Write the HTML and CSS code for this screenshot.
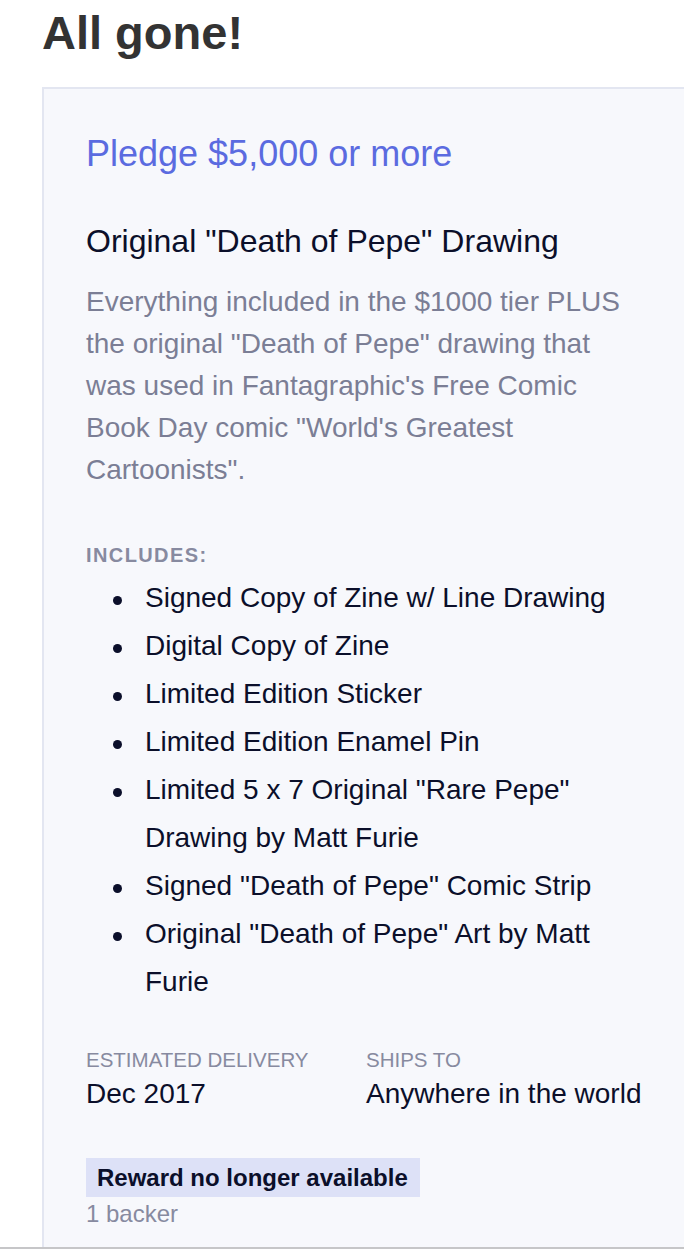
FILE: index.html
```html
<!DOCTYPE html>
<html>
<head>
<meta charset="utf-8">
<link rel="stylesheet" href="styles.css">
</head>
<body>
<div class="page">
  <h1 class="heading">All gone!</h1>
  <div class="card">
    <div class="pledge">Pledge $5,000 or more</div>
    <h3 class="title">Original "Death of Pepe" Drawing</h3>
    <p class="desc">Everything included in the $1000 tier PLUS the original "Death of Pepe" drawing that was used in Fantagraphic's Free Comic Book Day comic "World's Greatest Cartoonists".</p>
    <div class="label includes">INCLUDES:</div>
    <ul class="items">
      <li>Signed Copy of Zine w/ Line Drawing</li>
      <li>Digital Copy of Zine</li>
      <li>Limited Edition Sticker</li>
      <li>Limited Edition Enamel Pin</li>
      <li>Limited 5 x 7 Original "Rare Pepe" Drawing by Matt Furie</li>
      <li>Signed "Death of Pepe" Comic Strip</li>
      <li>Original "Death of Pepe" Art by Matt Furie</li>
    </ul>
    <div class="meta">
      <div class="meta-col first">
        <div class="label">ESTIMATED DELIVERY</div>
        <div class="value">Dec 2017</div>
      </div>
      <div class="meta-col">
        <div class="label">SHIPS TO</div>
        <div class="value">Anywhere in the world</div>
      </div>
    </div>
    <div class="badge">Reward no longer available</div>
    <div class="backers">1 backer</div>
  </div>
  <div class="footer-line"></div>
</div>
</body>
</html>
```
FILE: styles.css
```css
html, body {
  margin: 0;
  padding: 0;
  background: #ffffff;
  overflow-x: hidden;
}
body {
  font-family: "Liberation Sans", Arial, Helvetica, sans-serif;
  color: #0b0f2a;
}
.page {
  width: 684px;
  overflow: hidden;
}
.heading {
  margin: 5px 0 0 42px;
  font-size: 47px;
  line-height: 56px;
  font-weight: bold;
  color: #333333;
}
.card {
  margin: 26px -40px 0 42px;
  background: #f7f8fc;
  border-top: 2px solid #e3e6f1;
  border-left: 2px solid #e3e6f1;
  padding: 43px 0 19px 42px;
}
.pledge {
  font-size: 36px;
  line-height: 44px;
  color: #5b6be0;
}
.title {
  margin: 45px 0 0 0;
  font-size: 32px;
  line-height: 40px;
  font-weight: normal;
  color: #0b0f2a;
}
.desc {
  margin: 20px 0 0 0;
  width: 560px;
  font-size: 28px;
  line-height: 42px;
  color: #7b7e95;
}
.label {
  font-size: 20px;
  line-height: 24px;
  color: #878aa0;
  text-transform: uppercase;
}
.includes {
  margin-top: 52px;
  font-weight: bold;
  letter-spacing: 1.4px;
}
.items {
  margin: 7px 0 0 0;
  padding: 0 0 0 59px;
  width: 500px;
  list-style: none;
  font-size: 28px;
  line-height: 48px;
  color: #0b0f2a;
}
.items li {
  position: relative;
}
.items li::before {
  content: "";
  position: absolute;
  left: -32px;
  top: 22px;
  width: 9px;
  height: 9px;
  border-radius: 50%;
  background: #0b0f2a;
}
.meta {
  display: flex;
  margin-top: 42px;
}
.meta-col.first {
  width: 280px;
}
.meta .label {
  font-size: 20.5px;
}
.value {
  margin-top: 5px;
  font-size: 28px;
  line-height: 34px;
  color: #0b0f2a;
}
.badge {
  display: inline-block;
  margin-top: 47px;
  padding: 0 12px 0 11px;
  background: #dde1f7;
  font-size: 24px;
  line-height: 39px;
  font-weight: bold;
  color: #0b0f2a;
}
.backers {
  margin-top: 3px;
  font-size: 24px;
  line-height: 28px;
  color: #878aa0;
}
.footer-line {
  height: 2px;
  background: #c6c6c8;
}
```
